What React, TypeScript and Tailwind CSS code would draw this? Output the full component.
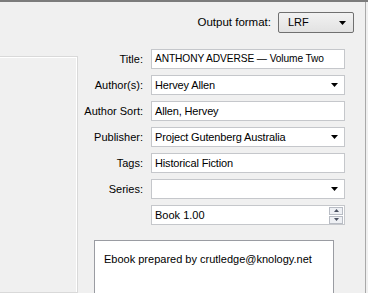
const font = { fontFamily: '"Liberation Sans", Arial, sans-serif' };

function Arrow() {
  return (
    <svg width="7" height="4" viewBox="0 0 7 4" className="shrink-0">
      <path d="M0 0h7L3.5 4z" fill="#000" />
    </svg>
  );
}

function Field({ value, small }: { value: string; small?: boolean }) {
  return (
    <div
      className={
        small
          ? "flex h-[20px] items-center border border-[#c5c7cb] bg-white pl-[3px] text-[10.2px] tracking-[-0.1px] text-black"
          : "flex h-[20px] items-center border border-[#c5c7cb] bg-white pl-[3px] text-[11px] tracking-[-0.15px] text-black"
      }
    >
      {value}
    </div>
  );
}

function Combo({ value }: { value: string }) {
  return (
    <div className="flex h-[20px] items-center justify-between border border-[#c5c7cb] bg-white pl-[3px] pr-[6px] text-[11px] tracking-[-0.15px] text-black">
      <span>{value}</span>
      <Arrow />
    </div>
  );
}

function Spin({ value }: { value: string }) {
  return (
    <div className="flex h-[20px] items-center justify-between border border-[#c5c7cb] bg-white pl-[3px] pr-[1px] text-[11px] text-black">
      <span>{value}</span>
      <div className="flex flex-col gap-px">
        <div className="flex h-[8px] w-[14px] items-center justify-center border border-[#b8bcc4] bg-[#eef0f4]">
          <svg width="5" height="3" viewBox="0 0 5 3">
            <path d="M0 3h5L2.5 0z" fill="#4a5060" />
          </svg>
        </div>
        <div className="flex h-[8px] w-[14px] items-center justify-center border border-[#b8bcc4] bg-[#eef0f4]">
          <svg width="5" height="3" viewBox="0 0 5 3">
            <path d="M0 0h5L2.5 3z" fill="#4a5060" />
          </svg>
        </div>
      </div>
    </div>
  );
}

const rows: { label: string; kind: "field" | "combo" | "spin"; value: string }[] = [
  { label: "Title:", kind: "field", value: "ANTHONY ADVERSE — Volume Two" },
  { label: "Author(s):", kind: "combo", value: "Hervey Allen" },
  { label: "Author Sort:", kind: "field", value: "Allen, Hervey" },
  { label: "Publisher:", kind: "combo", value: "Project Gutenberg Australia" },
  { label: "Tags:", kind: "field", value: "Historical Fiction" },
  { label: "Series:", kind: "combo", value: "" },
  { label: "", kind: "spin", value: "Book 1.00" },
];

export default function App() {
  return (
    <div
      className="flex h-[293px] w-[368px] overflow-hidden border-t-2 border-[#7c7c7c] bg-[#f0f0f0] text-[11px] text-black"
      style={font}
    >
      <div className="flex flex-1 flex-col border-r border-[#a9a9a9]">
        <div className="flex h-[47px] shrink-0 items-start justify-end pr-[11px] pt-[10px]">
          <div className="flex items-center gap-[7px]">
            <span className="text-[11.5px]">Output format:</span>
            <div className="flex h-[21px] w-[76px] items-center justify-between rounded-[2px] border border-[#707070] bg-gradient-to-b from-[#f2f2f2] to-[#e2e2e2] pl-[9px] pr-[7px]">
              <span>LRF</span>
              <Arrow />
            </div>
          </div>
        </div>
        <div className="flex min-h-0 flex-1">
          <div className="-ml-px mt-[7px] w-[79px] shrink-0 border border-[#d9d9d9] shadow-[inset_-1px_1px_0_#fff]" />
          <div className="flex flex-col pl-[1px]">
            <div className="grid grid-cols-[64px_194px] gap-x-2 gap-y-[6px]">
              {rows.map((r, i) => (
                <div key={i} className="contents">
                  <div className="flex h-[20px] items-center justify-end text-[11px]">{r.label}</div>
                  {r.kind === "field" ? (
                    <Field value={r.value} small={i === 0} />
                  ) : r.kind === "combo" ? (
                    <Combo value={r.value} />
                  ) : (
                    <Spin value={r.value} />
                  )}
                </div>
              ))}
            </div>
            <div className="ml-[15px] mt-[15px] h-[60px] w-[240px] shrink-0 border border-[#9a9ca2] bg-white pl-[9px] pt-[10px]">
              Ebook prepared by crutledge@knology.net
            </div>
          </div>
        </div>
      </div>
      <div className="w-[2px] shrink-0" />
    </div>
  );
}
